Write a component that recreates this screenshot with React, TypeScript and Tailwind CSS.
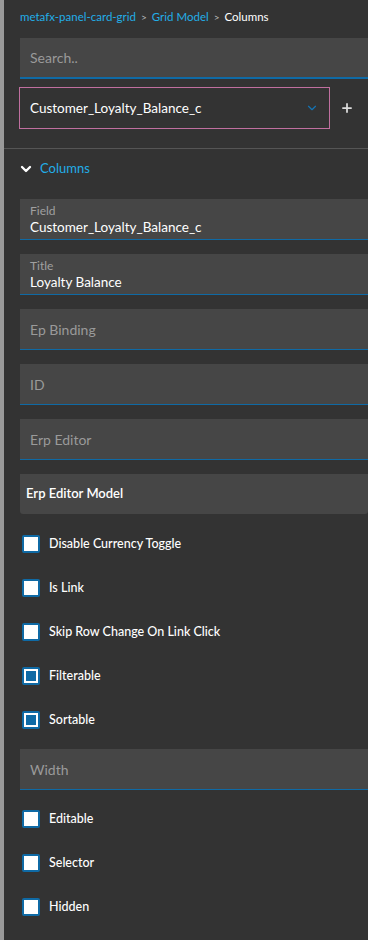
import { ChevronDown, Plus } from 'lucide-react';

const font = { fontFamily: 'Lato, "Noto Sans", sans-serif' };

function TextBox({ label, value }: { label: string; value?: string }) {
  if (value) {
    return (
      <div className="h-[41px] bg-[#464646] border-b border-[#0f6aa5] pl-[10px] pt-[5px]">
        <div className="text-[12px] leading-[14px] text-[#a0a0a0]">{label}</div>
        <div className="text-[13.5px] leading-[18px] text-white">{value}</div>
      </div>
    );
  }
  return (
    <div className="h-[41px] bg-[#464646] border-b border-[#0f6aa5] pl-[10px] flex items-center">
      <span className="text-[14px] text-[#9a9a9a]">{label}</span>
    </div>
  );
}

function Check({ label, checked = false }: { label: string; checked?: boolean }) {
  return (
    <div className="h-[44px] flex items-center pl-[2px]">
      <span className="w-[18px] h-[18px] rounded-[2px] border-2 border-[#0f6aa5] bg-white flex items-center justify-center">
        {checked && <span className="w-[10px] h-[10px] bg-[#0f6aa5]" />}
      </span>
      <span className="ml-[9px] text-[12.5px] font-medium text-white">{label}</span>
    </div>
  );
}

export default function App() {
  return (
    <div className="w-[368px] h-[940px] bg-[#333333] border-l-4 border-[#9a9a9a] overflow-hidden" style={font}>
      {/* Breadcrumb */}
      <div className="pl-4 pt-[9px] h-[38px] text-[11.5px] leading-[16px]">
        <span className="text-[#22aee8]">metafx-panel-card-grid</span>
        <span className="text-[#bbbbbb] mx-[5px] text-[10px]">&gt;</span>
        <span className="text-[#22aee8]">Grid Model</span>
        <span className="text-[#bbbbbb] mx-[5px] text-[10px]">&gt;</span>
        <span className="text-white">Columns</span>
      </div>

      {/* Search */}
      <div className="pl-4">
        <div className="h-[41px] bg-[#464646] border-b-2 border-[#0f6aa5] pl-[10px] flex items-center">
          <span className="text-[14px] text-[#9a9a9a]">Search..</span>
        </div>
      </div>

      {/* Select */}
      <div className="pl-[15px] pt-[8px] flex items-center">
        <div className="w-[311px] h-[42px] border border-[#c06f9f] flex items-center justify-between pl-[10px] pr-[10px]">
          <span className="text-[13.5px] text-white">Customer_Loyalty_Balance_c</span>
          <ChevronDown className="w-[14px] h-[14px] text-[#1574b4]" strokeWidth={2} />
        </div>
        <Plus className="ml-[10px] w-[14px] h-[14px] text-[#dddddd]" strokeWidth={3} />
      </div>

      <div className="mt-[19px] border-t border-[#555555]" />

      {/* Section header */}
      <div className="pl-4 h-[40px] flex items-center">
        <ChevronDown className="-ml-[2px] w-[16px] h-[16px] text-white" strokeWidth={3.5} />
        <span className="ml-[6px] text-[13px] text-[#22aee8]">Columns</span>
      </div>

      <div className="pl-4 pt-[10px] flex flex-col">
        <div className="flex flex-col gap-[14px]">
          <TextBox label="Field" value="Customer_Loyalty_Balance_c" />
          <TextBox label="Title" value="Loyalty Balance" />
          <TextBox label="Ep Binding" />
          <TextBox label="ID" />
          <TextBox label="Erp Editor" />
          <div className="h-[40px] bg-[#464646] rounded-b-[3px] pl-[6px] flex items-center">
            <span className="text-[13px] font-semibold text-white">Erp Editor Model</span>
          </div>
        </div>

        <div className="mt-[8px]">
          <Check label="Disable Currency Toggle" />
          <Check label="Is Link" />
          <Check label="Skip Row Change On Link Click" />
          <Check label="Filterable" checked />
          <Check label="Sortable" checked />
        </div>

        <div className="mt-[7px]">
          <TextBox label="Width" />
        </div>

        <div className="mt-[7px]">
          <Check label="Editable" />
          <Check label="Selector" />
          <Check label="Hidden" />
        </div>
      </div>
    </div>
  );
}
